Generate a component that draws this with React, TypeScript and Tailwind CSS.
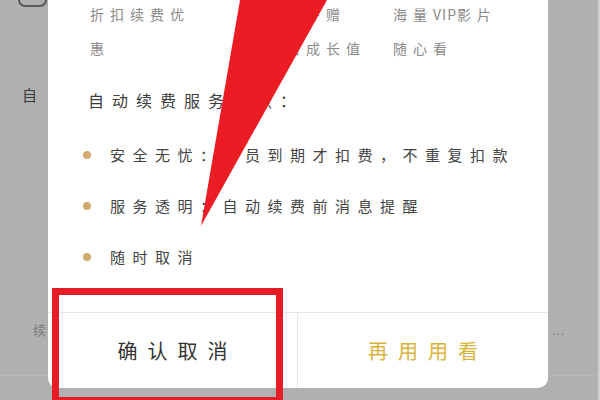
import React from "react";

const CJK = { fontFamily: '"Noto Sans CJK SC", "Noto Sans", sans-serif' };

const perks: React.ReactNode[][] = [
  ["折扣续费优", "惠"],
  ["续费额外赠", "送双倍成长值"],
  [
    <>
      海量<span className="tracking-[1px]">VIP</span>影片
    </>,
    "随心看",
  ],
];

const features = ["安全无忧：会员到期才扣费，不重复扣款", "服务透明：自动续费前消息提醒", "随时取消"];

function Dialog() {
  return (
    <div className="absolute left-[48px] top-[-20px] bottom-[12px] flex w-[500px] flex-col rounded-[10px] bg-white">
      <div className="flex-1">
        <div className="flex pl-[42px] pt-[17px] text-[14px] leading-[34px] tracking-[6px] text-[#8a8a8a]">
          {perks.map((lines, i) => (
            <div key={i} className={i === 0 ? "w-[156px]" : i === 1 ? "w-[147px]" : ""}>
              {lines.map((l, j) => (
                <div key={j} className="whitespace-nowrap">
                  {l}
                </div>
              ))}
            </div>
          ))}
        </div>
        <div className="mt-[23px] pl-[40px] text-[16px] leading-[24px] tracking-[8px] text-[#3c3c3c]">
          自动续费服务特点：
        </div>
        <div className="mt-[31px] flex flex-col gap-[27px] pl-[35px]">
          {features.map((f) => (
            <div key={f} className="flex h-[24px] items-center">
              <span className="h-2 w-2 shrink-0 rounded-full bg-[#d2a96e]" />
              <span className="ml-[19px] whitespace-nowrap text-[15px] leading-[24px] tracking-[7.5px] text-[#444]">
                {f}
              </span>
            </div>
          ))}
        </div>
      </div>
      <div className="flex h-[76px] border-t border-[#e6e6e6]">
        <button className="flex w-[250px] items-center justify-center border-r border-[#e6e6e6] pl-[10px] text-[20px] tracking-[10px] text-[#333]">
          确认取消
        </button>
        <button className="flex flex-1 items-center justify-center pl-[10px] text-[20px] tracking-[10px] text-[#d8b43c]">
          再用用看
        </button>
      </div>
    </div>
  );
}

export default function App() {
  return (
    <div className="relative h-[400px] w-[600px] overflow-hidden bg-[#b0b0b0]" style={CJK}>
      <div className="flex h-full flex-col">
        <div className="ml-[18px] mt-[-22px] h-[29px] w-[29px] rounded-[7px] border-2 border-[#5a5a5a]" />
        <div className="ml-[22px] mt-[78px] text-[15px] leading-[20px] text-[#3a3a3a]">自</div>
        <div className="mt-[215px] flex items-center justify-between pl-[33px] pr-[35px] text-[13px] leading-[20px] text-[#7a7a7a]">
          <span>续</span>
          <span className="text-[11px] tracking-[1px]">...</span>
        </div>
        <div className="mt-[35px] h-px bg-[#b8b8b8]" />
      </div>
      <div className="absolute right-0 top-0 h-full w-[2px] bg-[#cfcfcf]" />
      <Dialog />
      <svg className="absolute left-0 top-0" width="600" height="400" viewBox="0 0 600 400">
        <polygon points="240,0 327,0 201,226" fill="#ec1c24" />
      </svg>
      <div className="absolute left-[52px] top-[288px] h-[116px] w-[231px] border-[7px] border-[#e51d26]" />
    </div>
  );
}
